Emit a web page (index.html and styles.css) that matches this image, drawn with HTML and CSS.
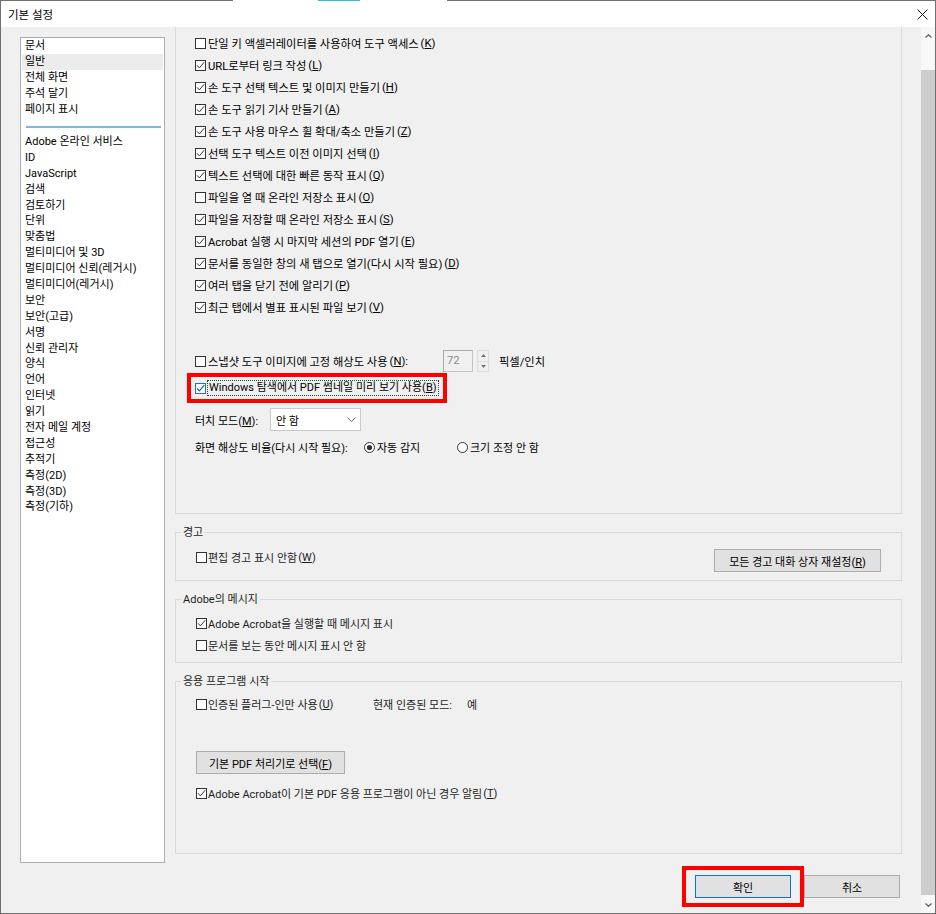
FILE: index.html
```html
<!DOCTYPE html>
<html lang="ko">
<head>
<meta charset="utf-8">
<title>기본 설정</title>
<link rel="stylesheet" href="styles.css">
</head>
<body>
<svg class="defs" width="0" height="0" aria-hidden="true">
  <symbol id="cb-off" viewBox="0 0 11 11"><rect x="0.5" y="0.5" width="10" height="10" fill="#fff" stroke="#333"/></symbol>
  <symbol id="cb-on" viewBox="0 0 11 11"><rect x="0.5" y="0.5" width="10" height="10" fill="#fff" stroke="#333"/><path d="M2 5.3L4.4 7.9L9.2 2.2" fill="none" stroke="#333" stroke-width="1"/></symbol>
  <symbol id="cb-focus" viewBox="0 0 11 11"><rect x="0.5" y="0.5" width="10" height="10" fill="#fff" stroke="#1c74c9"/><path d="M2 5.3L4.4 7.9L9.2 2.2" fill="none" stroke="#1a5fa8" stroke-width="1.1"/></symbol>
  <symbol id="rb-on" viewBox="0 0 11 11"><circle cx="5.5" cy="5.5" r="5" fill="#fff" stroke="#333"/><circle cx="5.5" cy="5.5" r="2.6" fill="#333"/></symbol>
  <symbol id="rb-off" viewBox="0 0 11 11"><circle cx="5.5" cy="5.5" r="5" fill="#fff" stroke="#333"/></symbol>
</svg>
<div class="window">
  <div class="topline"></div>
  <header class="titlebar">
    <span class="title">기본 설정</span>
    <svg class="close" width="11" height="11" viewBox="0 0 11 11"><path d="M0.5 0.5L10.5 10.5M10.5 0.5L0.5 10.5" stroke="#1a1a1a" stroke-width="1"/></svg>
  </header>
  <div class="body">
    <div class="side-wrap">
      <nav class="sidebar">
        <ul class="cats">
          <li>문서</li>
          <li class="sel">일반</li>
          <li>전체 화면</li>
          <li>주석 달기</li>
          <li>페이지 표시</li>
        </ul>
        <div class="sep"></div>
        <ul class="cats more">
          <li>Adobe 온라인 서비스</li>
          <li>ID</li>
          <li>JavaScript</li>
          <li>검색</li>
          <li>검토하기</li>
          <li>단위</li>
          <li>맞춤법</li>
          <li>멀티미디어 및 3D</li>
          <li>멀티미디어 신뢰(레거시)</li>
          <li>멀티미디어(레거시)</li>
          <li>보안</li>
          <li>보안(고급)</li>
          <li>서명</li>
          <li>신뢰 관리자</li>
          <li>양식</li>
          <li>언어</li>
          <li>인터넷</li>
          <li>읽기</li>
          <li>전자 메일 계정</li>
          <li>접근성</li>
          <li>추적기</li>
          <li>측정(2D)</li>
          <li>측정(3D)</li>
          <li>측정(기하)</li>
        </ul>
      </nav>
    </div>
    <main class="main">
      <section class="panel">
        <div class="checklist">
          <label class="cb"><svg class="box"><use href="#cb-off"/></svg>단일 키 액셀러레이터를 사용하여 도구 액세스<span class="ak">(<u>K</u>)</span></label>
          <label class="cb"><svg class="box"><use href="#cb-on"/></svg>URL로부터 링크 작성<span class="ak">(<u>L</u>)</span></label>
          <label class="cb"><svg class="box"><use href="#cb-on"/></svg>손 도구 선택 텍스트 및 이미지 만들기<span class="ak">(<u>H</u>)</span></label>
          <label class="cb"><svg class="box"><use href="#cb-on"/></svg>손 도구 읽기 기사 만들기<span class="ak">(<u>A</u>)</span></label>
          <label class="cb"><svg class="box"><use href="#cb-on"/></svg>손 도구 사용 마우스 휠 확대/축소 만들기<span class="ak">(<u>Z</u>)</span></label>
          <label class="cb"><svg class="box"><use href="#cb-on"/></svg>선택 도구 텍스트 이전 이미지 선택<span class="ak">(<u>I</u>)</span></label>
          <label class="cb"><svg class="box"><use href="#cb-on"/></svg>텍스트 선택에 대한 빠른 동작 표시<span class="ak">(<u>Q</u>)</span></label>
          <label class="cb"><svg class="box"><use href="#cb-off"/></svg>파일을 열 때 온라인 저장소 표시<span class="ak">(<u>O</u>)</span></label>
          <label class="cb"><svg class="box"><use href="#cb-on"/></svg>파일을 저장할 때 온라인 저장소 표시<span class="ak">(<u>S</u>)</span></label>
          <label class="cb"><svg class="box"><use href="#cb-on"/></svg>Acrobat 실행 시 마지막 세션의 PDF 열기<span class="ak">(<u>E</u>)</span></label>
          <label class="cb"><svg class="box"><use href="#cb-on"/></svg>문서를 동일한 창의 새 탭으로 열기(다시 시작 필요)<span class="ak">(<u>D</u>)</span></label>
          <label class="cb"><svg class="box"><use href="#cb-on"/></svg>여러 탭을 닫기 전에 알리기<span class="ak">(<u>P</u>)</span></label>
          <label class="cb"><svg class="box"><use href="#cb-on"/></svg>최근 탭에서 별표 표시된 파일 보기<span class="ak">(<u>V</u>)</span></label>
        </div>

        <div class="row snap">
          <label class="cb snap-label"><svg class="box"><use href="#cb-off"/></svg>스냅샷 도구 이미지에 고정 해상도 사용<span class="ak">(<u>N</u>):</span></label>
          <span class="num">72</span>
          <span class="spin">
            <span class="spin-btn"><svg width="5" height="3" viewBox="0 0 5 3"><path d="M0 3L2.5 0L5 3Z" fill="#777"/></svg></span>
            <span class="spin-btn"><svg width="5" height="3" viewBox="0 0 5 3"><path d="M0 0L2.5 3L5 0Z" fill="#777"/></svg></span>
          </span>
          <span class="unit">픽셀/인치</span>
        </div>

        <div class="row win-row">
          <div class="mark">
            <label class="cb"><svg class="box"><use href="#cb-focus"/></svg><span class="focus">Windows 탐색에서 PDF 썸네일 미리 보기 사용<span class="ak">(<u>B</u>)</span></span></label>
          </div>
        </div>

        <div class="row touch">
          <span class="touch-label">터치 모드<span class="ak">(<u>M</u>):</span></span>
          <span class="select">
            <span class="select-text">안 함</span>
            <svg width="9" height="5" viewBox="0 0 9 5"><path d="M0.5 0.5L4.5 4.5L8.5 0.5" fill="none" stroke="#666" stroke-width="1"/></svg>
          </span>
        </div>

        <div class="row ratio">
          <span class="ratio-label">화면 해상도 비율(다시 시작 필요):</span>
          <label class="radio"><svg class="box"><use href="#rb-on"/></svg>자동 감지</label>
          <label class="radio"><svg class="box"><use href="#rb-off"/></svg>크기 조정 안 함</label>
        </div>
      </section>

      <fieldset class="group">
        <legend>경고</legend>
        <div class="inner warn">
          <label class="cb low"><svg class="box"><use href="#cb-off"/></svg>편집 경고 표시 안함<span class="ak">(<u>W</u>)</span></label>
          <button class="btn reset" type="button">모든 경고 대화 상자 재설정<span class="ak">(<u>R</u>)</span></button>
        </div>
      </fieldset>

      <fieldset class="group">
        <legend>Adobe의 메시지</legend>
        <div class="inner msgs">
          <label class="cb low"><svg class="box"><use href="#cb-on"/></svg>Adobe Acrobat을 실행할 때 메시지 표시</label>
          <label class="cb low"><svg class="box"><use href="#cb-off"/></svg>문서를 보는 동안 메시지 표시 안 함</label>
        </div>
      </fieldset>

      <fieldset class="group">
        <legend>응용 프로그램 시작</legend>
        <div class="inner start">
          <div class="cert-row">
            <label class="cb low cert"><svg class="box"><use href="#cb-off"/></svg>인증된 플러그-인만 사용<span class="ak">(<u>U</u>)</span></label>
            <span class="cert-mode">현재 인증된 모드:</span>
            <span>예</span>
          </div>
          <button class="btn handler" type="button">기본 PDF 처리기로 선택<span class="ak">(<u>F</u>)</span></button>
          <label class="cb low notify"><svg class="box"><use href="#cb-on"/></svg>Adobe Acrobat이 기본 PDF 응용 프로그램이 아닌 경우 알림<span class="ak">(<u>T</u>)</span></label>
        </div>
      </fieldset>

      <div class="footer">
        <div class="mark-ok">
          <button class="btn wide default" type="button">확인</button>
        </div>
        <button class="btn wide" type="button">취소</button>
      </div>
    </main>
    <div class="gutter"></div>
    <div class="scrollbar">
      <div class="sb-btn"><svg width="7" height="4" viewBox="0 0 7 4"><path d="M0.5 3.5L3.5 0.7L6.5 3.5" fill="none" stroke="#606060" stroke-width="1.2"/></svg></div>
      <div class="sb-thumb"></div>
      <div class="sb-btn down"><svg width="7" height="4" viewBox="0 0 7 4"><path d="M0.5 0.5L3.5 3.3L6.5 0.5" fill="none" stroke="#606060" stroke-width="1.2"/></svg></div>
    </div>
  </div>
</div>
</body>
</html>
```

FILE: styles.css
```css
* { box-sizing: border-box; }

html, body {
  margin: 0;
  padding: 0;
}

body {
  width: 936px;
  height: 914px;
  overflow: hidden;
  background: #f0f0f0;
  font-family: Roboto, "Noto Sans CJK KR", "Noto Sans", sans-serif;
  font-size: 11px;
  color: #000;
  text-autospace: no-autospace;
}

.defs {
  position: absolute;
  width: 0;
  height: 0;
  overflow: hidden;
}

u { text-decoration: underline; text-underline-offset: 1px; }

.ak {
  font-family: Roboto, sans-serif;
  letter-spacing: 0;
}

.window {
  width: 936px;
  height: 914px;
  display: flex;
  flex-direction: column;
  border: 1px solid #707070;
  border-top: 0;
  background: #f0f0f0;
}

.topline {
  height: 1px;
  margin: 0 -1px;
  background: linear-gradient(to right,
    #707070 0 233px,
    #ffffff 233px 318px,
    #2ec3cf 318px 360px,
    #ffffff 360px 447px,
    #707070 447px 100%);
}

.titlebar {
  height: 26px;
  flex: none;
  display: flex;
  align-items: center;
  justify-content: space-between;
  padding: 0 7px 0 7px;
  background: #fff;
}

.title {
  font-size: 11.5px;
  color: #000;
}

.close { display: block; }

.body {
  flex: 1;
  display: flex;
  min-height: 0;
}

/* ---------- sidebar ---------- */
.side-wrap {
  flex: none;
  padding: 10px 10px 0 19px;
}

.sidebar {
  width: 145px;
  height: 826px;
  background: #fff;
  border: 1px solid #abadb3;
}

.cats {
  list-style: none;
  margin: 0;
  padding: 0;
}

.cats li {
  margin: 0 1px;
  padding-left: 3px;
  height: 16px;
  line-height: 16px;
  white-space: nowrap;
}

.cats.more li {
  height: 15.9px;
  line-height: 15.9px;
}

.cats li.sel { background: #ececec; }

.sep {
  height: 2px;
  margin: 8px 3px 6px 5px;
  background: #7db6ea;
}

/* ---------- main column ---------- */
.main {
  flex: none;
  width: 727px;
  display: flex;
  flex-direction: column;
}

.panel {
  height: 487px;
  flex: none;
  border: 1px solid #dadada;
  border-top: 0;
  padding: 5px 0 0 19px;
}

.checklist {
  display: flex;
  flex-direction: column;
  font-size: 11.25px;
}

.cb {
  display: flex;
  align-items: center;
  gap: 2px;
  height: 22px;
  white-space: nowrap;
}

.box {
  width: 11px;
  height: 11px;
  flex: none;
  display: block;
}

.row {
  display: flex;
  align-items: center;
  height: 22px;
  white-space: nowrap;
}

.snap { margin-top: 32px; font-size: 11.25px; }
.snap-label { width: 248px; }

.num {
  width: 30px;
  height: 22px;
  border: 1px solid #c4c4c4;
  border-left-color: #a9a9a9;
  border-top-color: #a9a9a9;
  background: #f0f0f0;
  color: #8c8c8c;
  padding-left: 3px;
  line-height: 20px;
}

.spin {
  width: 12px;
  height: 22px;
  margin-left: 4px;
  display: flex;
  flex-direction: column;
  border: 1px solid #dcdcdc;
}

.spin-btn {
  flex: 1;
  display: flex;
  align-items: center;
  justify-content: center;
}

.spin-btn + .spin-btn { border-top: 1px solid #dcdcdc; }

.spin-btn svg { display: block; }

.unit { margin-left: 10px; }

.win-row { margin-top: 5px; }

.mark {
  display: flex;
  align-items: center;
  height: 30px;
  margin: -4px 0 -4px -8px;
  padding: 0 5px 0 4px;
  border: 4px solid #ff0000;
}

.focus {
  padding: 0 1px;
  line-height: 14px;
  outline: 1px dotted #3a3a3a;
}

.touch {
  margin-top: 9px;
  height: 23px;
}

.touch-label { width: 75px; }

.select {
  width: 91px;
  height: 23px;
  display: flex;
  align-items: center;
  justify-content: space-between;
  padding: 0 4px 0 5px;
  background: #fff;
  border: 1px solid #cacaca;
}

.select svg { display: block; }

.ratio { margin-top: 5px; }
.ratio-label { width: 169px; }

.radio {
  display: flex;
  align-items: center;
  gap: 2px;
  width: 93px;
}

/* ---------- group boxes ---------- */
.group {
  margin: 11px 0 0 0;
  padding: 0;
  min-width: 0;
  border: 1px solid #dadada;
  color: #1e1e1e;
}

.group legend {
  margin-left: 5px;
  padding: 0 2px;
  line-height: 15px;
  height: 15px;
}

.inner { padding: 0 20px; }

.cb.low { gap: 1px; }

.warn {
  display: flex;
  justify-content: space-between;
  align-items: flex-start;
  padding-top: 9px;
  padding-bottom: 8px;
}

.warn .cb { height: 16px; }

.msgs {
  display: flex;
  flex-direction: column;
  padding-top: 5px;
  padding-bottom: 6px;
}

.start {
  display: flex;
  flex-direction: column;
  align-items: flex-start;
  padding-top: 4px;
  padding-bottom: 49px;
}

.cert-row {
  display: flex;
  align-items: center;
  height: 22px;
  white-space: nowrap;
}

.cert { width: 177px; }
.cert-mode { width: 94px; }

.handler {
  margin-top: 36px;
  width: 149px;
}

.notify { margin-top: 8px; }

/* ---------- buttons ---------- */
.btn {
  height: 23px;
  padding: 0;
  font-family: inherit;
  font-size: 11px;
  color: #000;
  background: #e1e1e1;
  border: 1px solid #adadad;
  white-space: nowrap;
}

.reset { width: 167px; }

.btn.wide { width: 96px; }

.btn.default { border-color: #0078d7; }

.footer {
  display: flex;
  justify-content: flex-end;
  gap: 13px;
  margin-top: 21px;
  padding-right: 2px;
}

.mark-ok {
  display: flex;
  margin: -9px -13px;
  padding: 5px 9px;
  border: 4px solid #ff0000;
}

/* ---------- scrollbar ---------- */
.gutter {
  flex: none;
  width: 19px;
}

.scrollbar {
  flex: none;
  width: 14px;
  display: flex;
  flex-direction: column;
  background: #f8f8f8;
}

.sb-btn {
  height: 17px;
  flex: none;
  display: flex;
  align-items: center;
  justify-content: center;
}

.sb-btn svg { display: block; }

.sb-thumb {
  height: 825px;
  flex: none;
  margin: 26px 0 1px;
  background: #cdcdcd;
}
```
